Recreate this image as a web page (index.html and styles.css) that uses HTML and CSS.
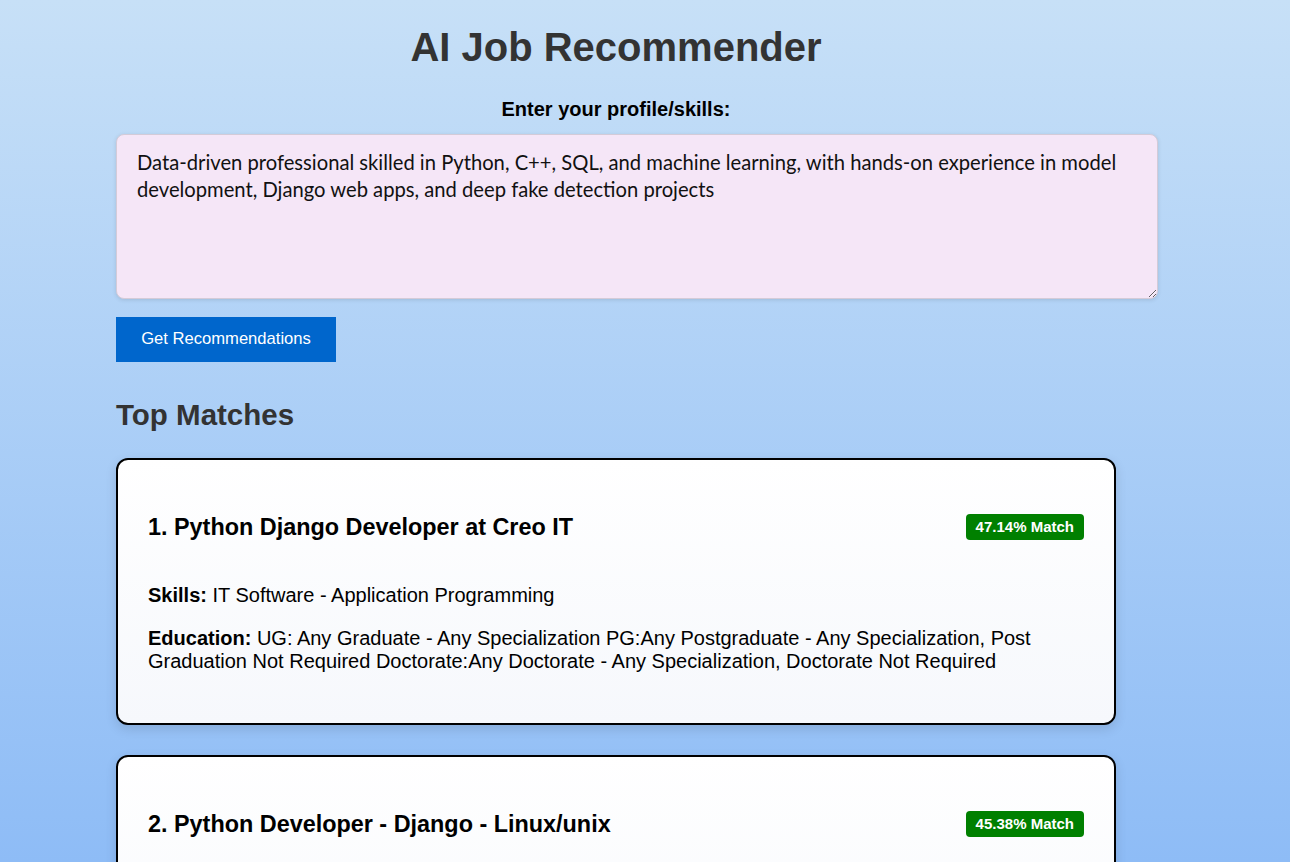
FILE: index.html
```html
<!DOCTYPE html>
<html lang="en">
<head>
<meta charset="utf-8">
<title>AI Job Recommender</title>
<link rel="stylesheet" href="styles.css">
</head>
<body>
<div class="container">
  <h1 class="title">AI Job Recommender</h1>
  <form class="form">
    <label class="label" for="profile">Enter your profile/skills:</label>
    <textarea id="profile" class="input">Data-driven professional skilled in Python, C++, SQL, and machine learning, with hands-on experience in model development, Django web apps, and deep fake detection projects</textarea>
    <button type="button" class="btn">Get Recommendations</button>
  </form>
  <h2 class="section-title">Top Matches</h2>
  <div class="card">
    <div class="card-head">
      <h3 class="job-title">1. Python Django Developer at Creo IT</h3>
      <span class="badge">47.14% Match</span>
    </div>
    <p class="info"><strong>Skills:</strong> IT Software - Application Programming</p>
    <p class="info"><strong>Education:</strong> UG: Any Graduate - Any Specialization PG:Any Postgraduate - Any Specialization, Post Graduation Not Required Doctorate:Any Doctorate - Any Specialization, Doctorate Not Required</p>
  </div>
  <div class="card">
    <div class="card-head">
      <h3 class="job-title">2. Python Developer - Django - Linux/unix</h3>
      <span class="badge">45.38% Match</span>
    </div>
    <p class="info"><strong>Skills:</strong> IT Software - Application Programming</p>
    <p class="info"><strong>Education:</strong> UG: Any Graduate - Any Specialization</p>
  </div>
</div>
</body>
</html>
```

FILE: styles.css
```css
html, body {
  margin: 0;
  padding: 0;
}
body {
  font-family: "Liberation Sans", Arial, sans-serif;
  background: linear-gradient(to bottom, #c7e0f7 0%, #8ebcf6 100%);
  background-attachment: fixed;
  min-height: 862px;
  color: #000;
}
.container {
  width: 1000px;
  margin-left: 116px;
  padding-top: 24px;
}
.title {
  text-align: center;
  font-size: 40px;
  color: #333;
  margin: 0 0 28px;
  line-height: 46px;
}
.form {
  display: flex;
  flex-direction: column;
  align-items: flex-start;
}
.label {
  align-self: center;
  font-weight: bold;
  font-size: 20px;
  margin-bottom: 13px;
}
.input {
  width: 1000px;
  height: 125px;
  padding: 14px 20px 24px;
  border: 1px solid #d4cbd8;
  border-radius: 8px;
  background: #f5e6f7;
  font-family: "Lato", "Open Sans", sans-serif;
  font-size: 20.2px;
  line-height: 27px;
  color: #111;
  box-shadow: 0 1px 4px rgba(0,0,0,0.12);
  resize: vertical;
  margin: 0 0 18px;
}
.btn {
  width: 220px;
  height: 45px;
  background: #0066cc;
  color: #fff;
  border: none;
  font-family: "Liberation Sans", Arial, sans-serif;
  font-size: 16.6px;
  padding: 0 0 2px;
}
.section-title {
  font-size: 29.5px;
  color: #333;
  margin: 37px 0 27px;
  line-height: 32px;
}
.card {
  border: 2px solid #000;
  border-radius: 12px;
  background: linear-gradient(to bottom, #ffffff, #f6f8fc);
  padding: 30px;
  margin-bottom: 30px;
  box-shadow: 0 4px 12px rgba(0,0,0,0.12);
}
.card-head {
  display: flex;
  justify-content: space-between;
  align-items: center;
}
.job-title {
  font-size: 23.4px;
  line-height: 27px;
  margin: 24px 0 23px;
}
.badge {
  background: #008000;
  color: #fff;
  font-weight: bold;
  font-size: 15px;
  line-height: 18px;
  padding: 4px 10px;
  border-radius: 4px;
}
.info {
  font-size: 20px;
  margin: 20px 0;
}
```
